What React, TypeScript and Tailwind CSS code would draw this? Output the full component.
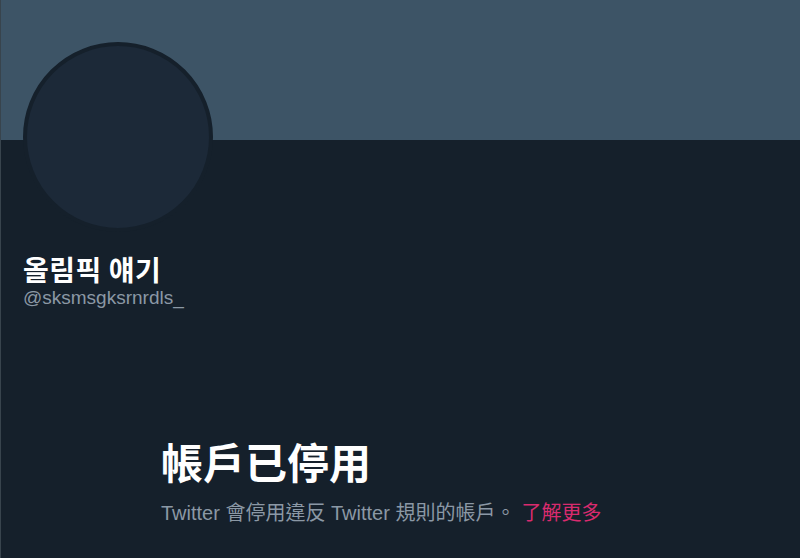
export default function App() {
  return (
    <div
      className="w-[800px] h-[558px] overflow-hidden bg-[#15202b] border-l border-[#38444d]"
      style={{ fontFamily: '"Liberation Sans", "Noto Sans CJK TC", "Noto Sans CJK KR", sans-serif' }}
    >
      <div className="h-[140px] bg-[#3d5466]" />

      <div className="px-[22px]">
        <div className="-mt-[98px] w-[190px] h-[190px] rounded-full bg-[#1c2938] border-[4px] border-[#15202b]" />

        <div className="mt-[20px]">
          <h1
            className="text-[28px] leading-[34px] font-bold text-white tracking-[0.5px]"
            style={{ fontFamily: '"Noto Sans CJK KR", sans-serif' }}
          >
            올림픽 얘기
          </h1>
          <p className="text-[19px] leading-[24px] text-[#8b98a5]">@sksmsgksrnrdls_</p>
        </div>
      </div>

      <div className="pl-[160px] mt-[131px]">
        <h2 className="text-[42px] leading-[48px] font-bold text-white">帳戶已停用</h2>
        <p className="mt-[10px] text-[20px] leading-[28px] text-[#8b98a5]">
          Twitter 會停用違反 Twitter 規則的帳戶。
          <span className="ml-[6px] text-[#d92b6e]">了解更多</span>
        </p>
      </div>
    </div>
  );
}
